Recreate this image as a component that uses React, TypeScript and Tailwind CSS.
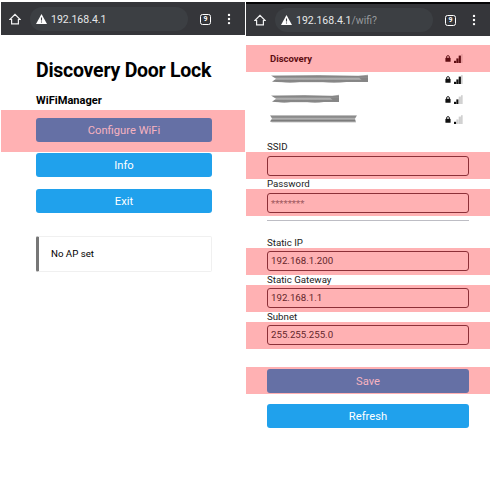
import type { ReactNode } from "react";

function BrowserBar({ path, right }: { path?: string; right?: boolean }) {
  return (
    <div
      className={
        right
          ? "flex h-[34px] items-center border-t-2 border-[#050506] bg-[#35363a] pl-[8px] pr-[14px]"
          : "flex h-[33px] items-center bg-[#35363a] pl-[8px] pr-[14px] pt-px"
      }
    >
      <svg className="h-[12px] w-[12px] shrink-0" viewBox="0 0 12 12" fill="none" stroke="#f1f1f2" strokeWidth="1.2">
        <path d="M0.9 6.5L6 1.4l5.1 5.1H9.4v4.4H2.6V6.5z" />
      </svg>
      <div className="ml-[9px] flex h-[24px] w-[158px] items-center rounded-full bg-[#3c3f43] pl-[6px]">
        <svg className="h-[10px] w-[11px] shrink-0" viewBox="0 0 11 10">
          <path d="M5.5 0L11 10H0z" fill="#fff" />
          <path d="M5.5 3.6v3M5.5 7.4v1.2" stroke="#3c3f43" strokeWidth="1.1" />
        </svg>
        <span className="ml-[4px] whitespace-nowrap pt-px text-[10.5px] leading-[12px] text-[#e6e7e9]">
          192.168.4.1<span className="text-[#96999d]">{path}</span>
        </span>
      </div>
      <div className="ml-auto flex h-[11px] w-[11px] shrink-0 items-center justify-center rounded-[2.5px] border border-white text-[7px] font-bold leading-[8px] text-white">
        9
      </div>
      <svg className="ml-[16px] h-[12px] w-[4px] shrink-0" viewBox="0 0 4 12" fill="#fff">
        <circle cx="2" cy="1.9" r="1.2" />
        <circle cx="2" cy="6" r="1.2" />
        <circle cx="2" cy="10.1" r="1.2" />
      </svg>
    </div>
  );
}

function Lock({ color }: { color: string }) {
  return (
    <svg className="h-[7px] w-[6px]" viewBox="0 0 6 7">
      <path d="M1.6 3V2a1.4 1.4 0 0 1 2.8 0v1" fill="none" stroke={color} strokeWidth="0.9" />
      <rect x="0.4" y="2.8" width="5.2" height="4" rx="0.6" fill={color} />
    </svg>
  );
}

function Signal({ bars, color, faint }: { bars: number; color: string; faint: string }) {
  return (
    <svg className="ml-[3px] h-[9px] w-[9px]" viewBox="0 0 9 9">
      {[2.2, 4.6, 7.4, 8.8].map((h, i) => (
        <rect
          key={h}
          x={i * 2.35}
          y={9 - h}
          width={i === 3 ? 1.6 : 2.2}
          height={h}
          fill={i < bars ? color : faint}
        />
      ))}
    </svg>
  );
}

function Network({ bars, children, selected }: { bars: number; children: ReactNode; selected?: boolean }) {
  return (
    <div
      className={
        selected
          ? "flex h-[27px] items-center bg-[#ffb1b3] pl-[21px] pr-[27px] text-[#5e0d12]"
          : "flex h-[20px] items-center pl-[21px] pr-[27px]"
      }
    >
      <div className="flex-1 pl-[3px]">{children}</div>
      <Lock color={selected ? "#5e0d12" : "#111"} />
      <Signal bars={bars} color={selected ? "#5e0d12" : "#111"} faint={selected ? "#e59a9c" : "#cfcfcf"} />
    </div>
  );
}

function Smudge({ width, wave }: { width: number; wave?: boolean }) {
  const id = `smudge-${width}`;
  return (
    <svg className="block h-[10px]" width={width + 4} height="10" viewBox={`0 0 ${width + 4} 10`}>
      <defs>
        <linearGradient id={id} x1="0" y1="0" x2="0" y2="1">
          <stop offset="0" stopColor="#b0b0b0" />
          <stop offset="0.24" stopColor="#808080" />
          <stop offset="0.5" stopColor="#b8b8b8" />
          <stop offset="0.76" stopColor="#757575" />
          <stop offset="1" stopColor="#c4c4c4" />
        </linearGradient>
        <filter id={`${id}-soft`} x="-5%" y="-30%" width="110%" height="160%">
          <feGaussianBlur stdDeviation="0.6" />
        </filter>
      </defs>
      <g filter={`url(#${id}-soft)`}>
        {wave ? (
          <>
            <path
              fill={`url(#${id})`}
              d={`M1 1.6L${width * 0.5} 1L${width * 0.9} 1.8L${width} 0.8V8H${width * 0.78}Q${width * 0.66} 9.8 ${width * 0.54} 8.2H${width * 0.3}Q${width * 0.2} 9.8 ${width * 0.12} 8.2L2 7.8L6 4.8Z`}
            />
            <path d={`M${width - 9} 3.6H${width}V7.6H${width - 5}Z`} fill="#858585" />
          </>
        ) : (
          <path
            fill={`url(#${id})`}
            d={`M0 1.2H${width}L${width - 2} 4.7L${width - 1} 8.4H2L0 7.6L2 4.6Z`}
          />
        )}
      </g>
    </svg>
  );
}

function Label({ children }: { children: string }) {
  return (
    <div className="flex h-[10px] items-center whitespace-nowrap pl-[21px] text-[9.7px] leading-none text-[#222]">
      {children}
    </div>
  );
}

function Field({ value, masked, top }: { value?: string; masked?: boolean; top: string }) {
  return (
    <div className={`h-[27px] bg-[#ffb1b3] pl-[21px] pr-[21px] ${top}`}>
      <div
        className={
          masked
            ? "flex h-[20px] items-center rounded-[3px] border border-[#8c3038] pl-[3px] pt-[2px] text-[9.7px] leading-none text-[#a05a61]"
            : "flex h-[20px] items-center rounded-[3px] border border-[#8c3038] pl-[3px] text-[9.7px] leading-none text-[#64252b]"
        }
      >
        {value}
      </div>
    </div>
  );
}

function Button({ children, marked }: { children: string; marked?: boolean }) {
  return (
    <div
      className={
        marked
          ? "flex h-[24px] items-center justify-center rounded-[3px] bg-[#6570a5] pt-[2px] text-[11.2px] leading-none text-[#f6b3c0]"
          : "flex h-[24px] items-center justify-center rounded-[3px] bg-[#20a1ec] pt-[2px] text-[11.2px] leading-none text-white"
      }
    >
      {children}
    </div>
  );
}

export default function App() {
  return (
    <div className="flex h-[480px] w-[491px] overflow-hidden bg-white pt-[2px] font-['Roboto',sans-serif] text-black">
      <div className="ml-[1px] w-[244px]">
        <BrowserBar />
        <h1 className="mt-[25px] whitespace-nowrap pl-[35px] text-[19.5px] font-bold leading-[22px] tracking-[-0.25px]">
          Discovery Door Lock
        </h1>
        <h2 className="mt-[13px] whitespace-nowrap pl-[35px] text-[11.1px] font-bold leading-[12px]">WiFiManager</h2>
        <div className="mt-[3px] h-[42px] bg-[#ffb1b3] pl-[35px] pr-[33px] pt-[8px]">
          <Button marked>Configure WiFi</Button>
        </div>
        <div className="mt-[1px] flex flex-col gap-[11px] pl-[35px] pr-[33px]">
          <Button>Info</Button>
          <div className="pt-px">
            <Button>Exit</Button>
          </div>
          <div className="mt-[12px] flex h-[36px] items-center rounded-[2px] border border-l-[3px] border-[#f0f0f0] border-l-[#777] pl-[12px] text-[9.7px] leading-none">
            No AP set
          </div>
        </div>
      </div>
      <div className="ml-[1px] w-[244px]">
        <BrowserBar path="/wifi?" right />
        <div className="h-[9px]" />
        <Network bars={3} selected>
          <span className="block text-[9.5px] font-bold leading-none">Discovery</span>
        </Network>
        <div className="-mt-[3px]">
          <Network bars={3}>
            <Smudge width={98} wave />
          </Network>
          <Network bars={2}>
            <Smudge width={69} wave />
          </Network>
          <Network bars={1}>
            <Smudge width={87} />
          </Network>
        </div>
        <div className="h-[13px]" />
        <Label>SSID</Label>
        <Field top="pt-[4px]" />
        <Label>Password</Label>
        <Field value="********" masked top="pt-[4px]" />
        <div className="mx-[21px] mt-[4px] h-px bg-[#bdbdc4]" />
        <div className="h-[17px]" />
        <Label>Static IP</Label>
        <Field value="192.168.1.200" top="pt-[3px]" />
        <Label>Static Gateway</Label>
        <Field value="192.168.1.1" top="pt-[3px]" />
        <Label>Subnet</Label>
        <Field value="255.255.255.0" top="pt-[3px]" />
        <div className="mt-[18px] h-[27px] bg-[#ffb1b3] px-[21px] pt-[2px]">
          <Button marked>Save</Button>
        </div>
        <div className="mt-[10px] px-[21px]">
          <Button>Refresh</Button>
        </div>
      </div>
    </div>
  );
}
